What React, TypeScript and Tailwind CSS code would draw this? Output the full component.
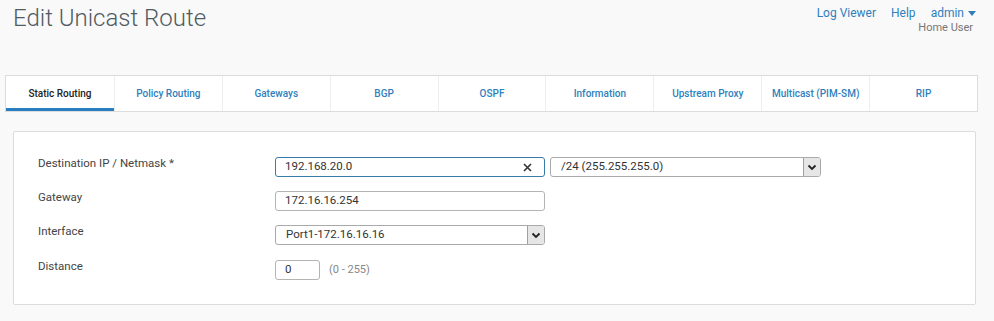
import React from "react";

const tabs = [
  "Static Routing",
  "Policy Routing",
  "Gateways",
  "BGP",
  "OSPF",
  "Information",
  "Upstream Proxy",
  "Multicast (PIM-SM)",
  "RIP",
];

function Arrow() {
  return (
    <div className="h-full w-[17px] border-l border-[#a0a0a0] bg-[#e6e6e6] flex items-center justify-center">
      <svg width="10" height="7" viewBox="0 0 10 7">
        <path d="M1.5 1.5 L5 5 L8.5 1.5" stroke="#222" strokeWidth="1.8" fill="none" />
      </svg>
    </div>
  );
}

export default function App() {
  return (
    <div
      className="w-[994px] h-[321px] bg-[#f9f9f9] overflow-hidden relative"
      style={{ fontFamily: "Roboto, 'Noto Sans', sans-serif" }}
    >
      <div className="flex justify-between">
        <div className="pl-[13px] pt-[3px] text-[24px] font-light text-[#515b62] leading-[30px]">
          Edit Unicast Route
        </div>
        <div className="pr-[18px] pt-[5px] flex flex-col items-end">
          <div className="flex gap-[15px] text-[12px] text-[#2f7fbd] leading-[16px]">
            <span>Log Viewer</span>
            <span>Help</span>
            <span className="flex items-center gap-[4px]">
              admin
              <svg width="8" height="5" viewBox="0 0 8 5">
                <path d="M0 0 H8 L4 5 Z" fill="#2f7fbd" />
              </svg>
            </span>
          </div>
          <div className="text-[11px] text-[#777] leading-[14px] mr-[3px]">Home User</div>
        </div>
      </div>

      <div className="ml-[5px] mt-[40px] w-[973px] h-[37px] flex bg-white border border-[#dcdcdc]">
        {tabs.map((t, i) => (
          <div
            key={t}
            className={
              "w-[108px] flex items-center justify-center text-[10px] font-medium " +
              (i === 0
                ? "text-[#222] border-b-[3px] border-[#2a7dbf] pt-[3px]"
                : "text-[#2f7fbd] border-l border-[#eeeeee]")
            }
          >
            {t}
          </div>
        ))}
      </div>

      <div className="ml-[13px] mt-[19px] w-[963px] h-[174px] bg-white border border-[#dcdcdc] rounded-[2px] pt-[25px] text-[11.5px] text-[#444]">
        <div className="flex items-center h-[20px]">
          <div className="w-[261px] pl-[24px] -mt-[6px]">Destination IP / Netmask *</div>
          <div className="w-[270px] h-[20px] border border-[#3a7ca8] rounded-[3px] flex items-center justify-between pl-[9px] pr-[12px] text-[#333]">
            <span>192.168.20.0</span>
            <svg width="9" height="9" viewBox="0 0 9 9">
              <path d="M1 1 L8 8 M8 1 L1 8" stroke="#333" strokeWidth="1.6" />
            </svg>
          </div>
          <div className="ml-[5px] w-[271px] h-[20px] border border-[#a9a9a9] rounded-[3px] flex items-center justify-between pl-[10px] overflow-hidden text-[#333]">
            <span>/24 (255.255.255.0)</span>
            <Arrow />
          </div>
        </div>

        <div className="flex items-center h-[20px] mt-[14px]">
          <div className="w-[261px] pl-[24px] -mt-[6px]">Gateway</div>
          <div className="w-[270px] h-[20px] border border-[#b4b4b4] rounded-[3px] flex items-center pl-[9px] text-[#333]">
            172.16.16.254
          </div>
        </div>

        <div className="flex items-center h-[20px] mt-[14px]">
          <div className="w-[261px] pl-[24px] -mt-[6px]">Interface</div>
          <div className="w-[270px] h-[20px] border border-[#a9a9a9] rounded-[3px] flex items-center justify-between pl-[10px] overflow-hidden text-[#333]">
            <span>Port1-172.16.16.16</span>
            <Arrow />
          </div>
        </div>

        <div className="flex items-center h-[20px] mt-[15px]">
          <div className="w-[261px] pl-[24px] -mt-[6px]">Distance</div>
          <div className="w-[45px] h-[20px] border border-[#b4b4b4] rounded-[3px] flex items-center pl-[9px] text-[#333]">
            0
          </div>
          <div className="ml-[9px] text-[11px] text-[#888]">(0 - 255)</div>
        </div>
      </div>
    </div>
  );
}
